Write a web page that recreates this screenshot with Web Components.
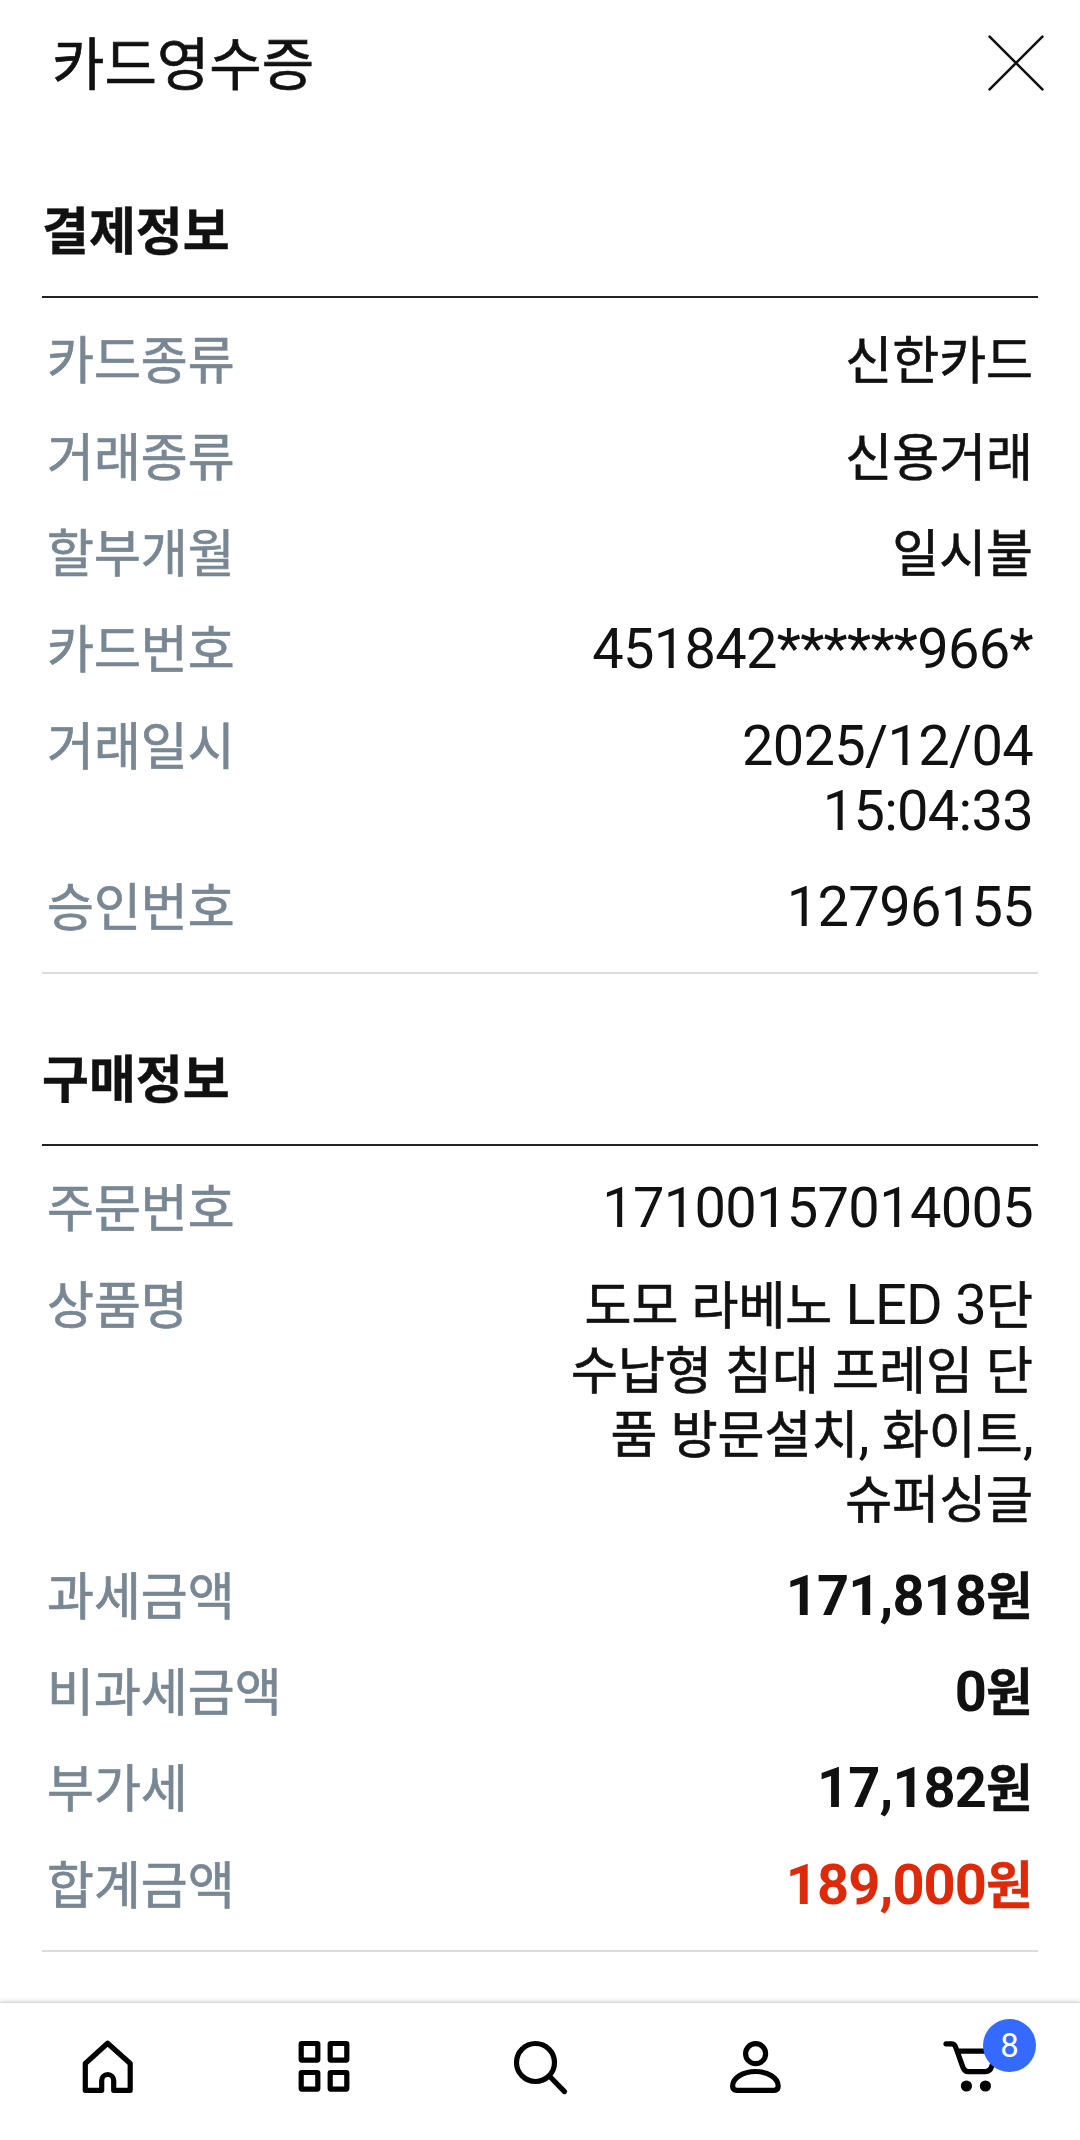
<!DOCTYPE html>
<html lang="ko">
<head>
<meta charset="UTF-8">
<meta name="viewport" content="width=device-width, initial-scale=1.0">
<title>카드영수증</title>
<style>
    * {
        box-sizing: border-box;
    }
    body {
        margin: 0;
        background: #fff;
        color: #111;
        font-family: Roboto, "Noto Sans CJK KR", sans-serif;
    }
</style>
</head>
<body>
<receipt-page>
    <receipt-header slot="header">카드영수증</receipt-header>
    <receipt-section heading="결제정보">
        <receipt-row label="카드종류" value="신한카드"></receipt-row>
        <receipt-row label="거래종류" value="신용거래"></receipt-row>
        <receipt-row label="할부개월" value="일시불"></receipt-row>
        <receipt-row label="카드번호" value="451842******966*"></receipt-row>
        <receipt-row label="거래일시" value="2025/12/04 15:04:33"></receipt-row>
        <receipt-row label="승인번호" value="12796155"></receipt-row>
    </receipt-section>
    <receipt-section heading="구매정보">
        <receipt-row label="주문번호" value="17100157014005"></receipt-row>
        <receipt-row label="상품명" value="도모 라베노 LED 3단 수납형 침대 프레임 단품 방문설치, 화이트, 슈퍼싱글"></receipt-row>
        <receipt-row label="과세금액" value="171,818원" strong></receipt-row>
        <receipt-row label="비과세금액" value="0원" strong></receipt-row>
        <receipt-row label="부가세" value="17,182원" strong></receipt-row>
        <receipt-row label="합계금액" value="189,000원" strong total></receipt-row>
    </receipt-section>
    <nav-bar slot="footer">
        <nav-item icon="home"></nav-item>
        <nav-item icon="category"></nav-item>
        <nav-item icon="search"></nav-item>
        <nav-item icon="user"></nav-item>
        <nav-item icon="cart">8</nav-item>
    </nav-bar>
</receipt-page>

<script>
class ReceiptPage extends HTMLElement {
    constructor() {
        super();
        this.attachShadow({ mode: 'open' });
        this.shadowRoot.innerHTML = `
            <style>
                :host {
                    display: flex;
                    flex-direction: column;
                    height: 2140px;
                    overflow: hidden;
                }
                main {
                    flex: 1;
                    min-height: 0;
                    padding: 68px 42px 0;
                }
            </style>
            <slot name="header"></slot>
            <main><slot></slot></main>
            <slot name="footer"></slot>
        `;
    }
}

class ReceiptHeader extends HTMLElement {
    constructor() {
        super();
        this.attachShadow({ mode: 'open' });
        this.shadowRoot.innerHTML = `
            <style>
                :host {
                    display: flex;
                    align-items: center;
                    justify-content: space-between;
                    height: 126px;
                    padding: 0 36px 0 52px;
                    font-size: 57px;
                }
                span {
                    padding-bottom: 6px;
                    -webkit-text-stroke: 0.7px;
                }
                svg {
                    display: block;
                }
            </style>
            <span><slot></slot></span>
            <svg width="56" height="56" viewBox="0 0 56 56" fill="none" stroke="#111" stroke-width="2.6" stroke-linecap="round">
                <path d="M1.6 1.6 54.4 54.4M54.4 1.6 1.6 54.4"/>
            </svg>
        `;
    }
}

class ReceiptSection extends HTMLElement {
    constructor() {
        super();
        this.attachShadow({ mode: 'open' });
        this.shadowRoot.innerHTML = `
            <style>
                :host {
                    display: block;
                    margin-bottom: 68px;
                }
                h2 {
                    margin: 0;
                    height: 102px;
                    line-height: 78px;
                    font-size: 51px;
                    font-weight: 700;
                    -webkit-text-stroke: 0.4px;
                }
                .rows {
                    border-top: 2px solid #222;
                    border-bottom: 2px solid #ddd;
                    padding: 14.5px 5px 16.5px;
                }
            </style>
            <h2>${this.getAttribute('heading')}</h2>
            <div class="rows"><slot></slot></div>
        `;
    }
}

class ReceiptRow extends HTMLElement {
    constructor() {
        super();
        this.attachShadow({ mode: 'open' });
        this.render();
    }

    // hangul is set a little smaller than the digits and latin letters
    hangul(text) {
        return text.replace(/[가-힣]+/g, '<span class="ko">$&</span>');
    }

    render() {
        this.shadowRoot.innerHTML = `
            <style>
                :host {
                    display: flex;
                    justify-content: space-between;
                    padding: 15.8px 0;
                    font-size: 56px;
                    line-height: 64.8px;
                    letter-spacing: -0.7px;
                }
                .label {
                    color: #788793;
                }
                .value {
                    width: 475px;
                    text-align: right;
                }
                .ko {
                    font-size: 51px;
                    line-height: 1;
                    letter-spacing: 0;
                    -webkit-text-stroke: 0.7px;
                }
                :host([strong]) .value {
                    font-weight: 700;
                    letter-spacing: -0.9px;
                }
                :host([strong]) .value .ko {
                    letter-spacing: 0;
                    -webkit-text-stroke: 0.4px;
                }
                :host([total]) .value {
                    color: #de2a0a;
                }
            </style>
            <div class="label">${this.hangul(this.getAttribute('label'))}</div>
            <div class="value">${this.hangul(this.getAttribute('value'))}</div>
        `;
    }
}

class NavBar extends HTMLElement {
    constructor() {
        super();
        this.attachShadow({ mode: 'open' });
        this.shadowRoot.innerHTML = `
            <style>
                :host {
                    display: grid;
                    grid-template-columns: repeat(5, 1fr);
                    flex: none;
                    box-sizing: border-box;
                    height: 138px;
                    padding-top: 33px;
                    border-top: 1px solid #d8d8d8;
                    background: #fff;
                    box-shadow: 0 -1px 4px rgba(0, 0, 0, 0.15);
                }
            </style>
            <slot></slot>
        `;
    }
}

const ICONS = {
    home: '<path d="M7.3 54.3V27.5L29.6 7.3 52.2 27.5V54.3H35.7V44.5a6 6 0 0 0-12 0V54.3Z"/>',
    category: `
        <rect x="7.2" y="7.5" width="16.6" height="16.6" rx=".5"/>
        <rect x="36.2" y="7.5" width="16.6" height="16.6" rx=".5"/>
        <rect x="7.2" y="36.5" width="16.6" height="16.6" rx=".5"/>
        <rect x="36.2" y="36.5" width="16.6" height="16.6" rx=".5"/>`,
    search: '<circle cx="25.5" cy="26.5" r="19"/><path d="M40.3 41 54.5 55.6"/>',
    user: `
        <circle cx="29.6" cy="17.7" r="10"/>
        <path d="M6.6 50C6.6 42 17 35.5 29.4 35.5S52.2 42 52.2 50Q52.2 54.3 48 54.3H11Q6.6 54.3 6.6 50Z"/>`,
    cart: `
        <path d="M4 7.8H9.5Q12.5 7.8 13.6 11L21 31.5Q22.6 35.6 26 35.6H43.5Q48 35.6 49.5 31L55 15.2H15.5"/>
        <circle cx="24.4" cy="50" r="5.6" fill="#000" stroke="none"/>
        <circle cx="43.4" cy="50" r="5.6" fill="#000" stroke="none"/>`
};

class NavItem extends HTMLElement {
    constructor() {
        super();
        this.attachShadow({ mode: 'open' });
        const badge = this.textContent ? '<span class="badge"><slot></slot></span>' : '';
        this.shadowRoot.innerHTML = `
            <style>
                :host {
                    display: flex;
                    justify-content: center;
                    align-items: flex-start;
                }
                .icon {
                    position: relative;
                    width: 60px;
                    height: 60px;
                }
                svg {
                    display: block;
                }
                .badge {
                    position: absolute;
                    left: 41px;
                    top: -17px;
                    width: 53px;
                    height: 53px;
                    border-radius: 50%;
                    background: #346aff;
                    color: #fff;
                    font-size: 33px;
                    line-height: 53px;
                    text-align: center;
                }
            </style>
            <div class="icon">
                <svg width="60" height="60" viewBox="0 0 60 60" fill="none" stroke="#000" stroke-width="5.2" stroke-linecap="round" stroke-linejoin="round">${ICONS[this.getAttribute('icon')]}</svg>
                ${badge}
            </div>
        `;
    }
}

customElements.define('receipt-page', ReceiptPage);
customElements.define('receipt-header', ReceiptHeader);
customElements.define('receipt-section', ReceiptSection);
customElements.define('receipt-row', ReceiptRow);
customElements.define('nav-bar', NavBar);
customElements.define('nav-item', NavItem);
</script>
</body>
</html>
